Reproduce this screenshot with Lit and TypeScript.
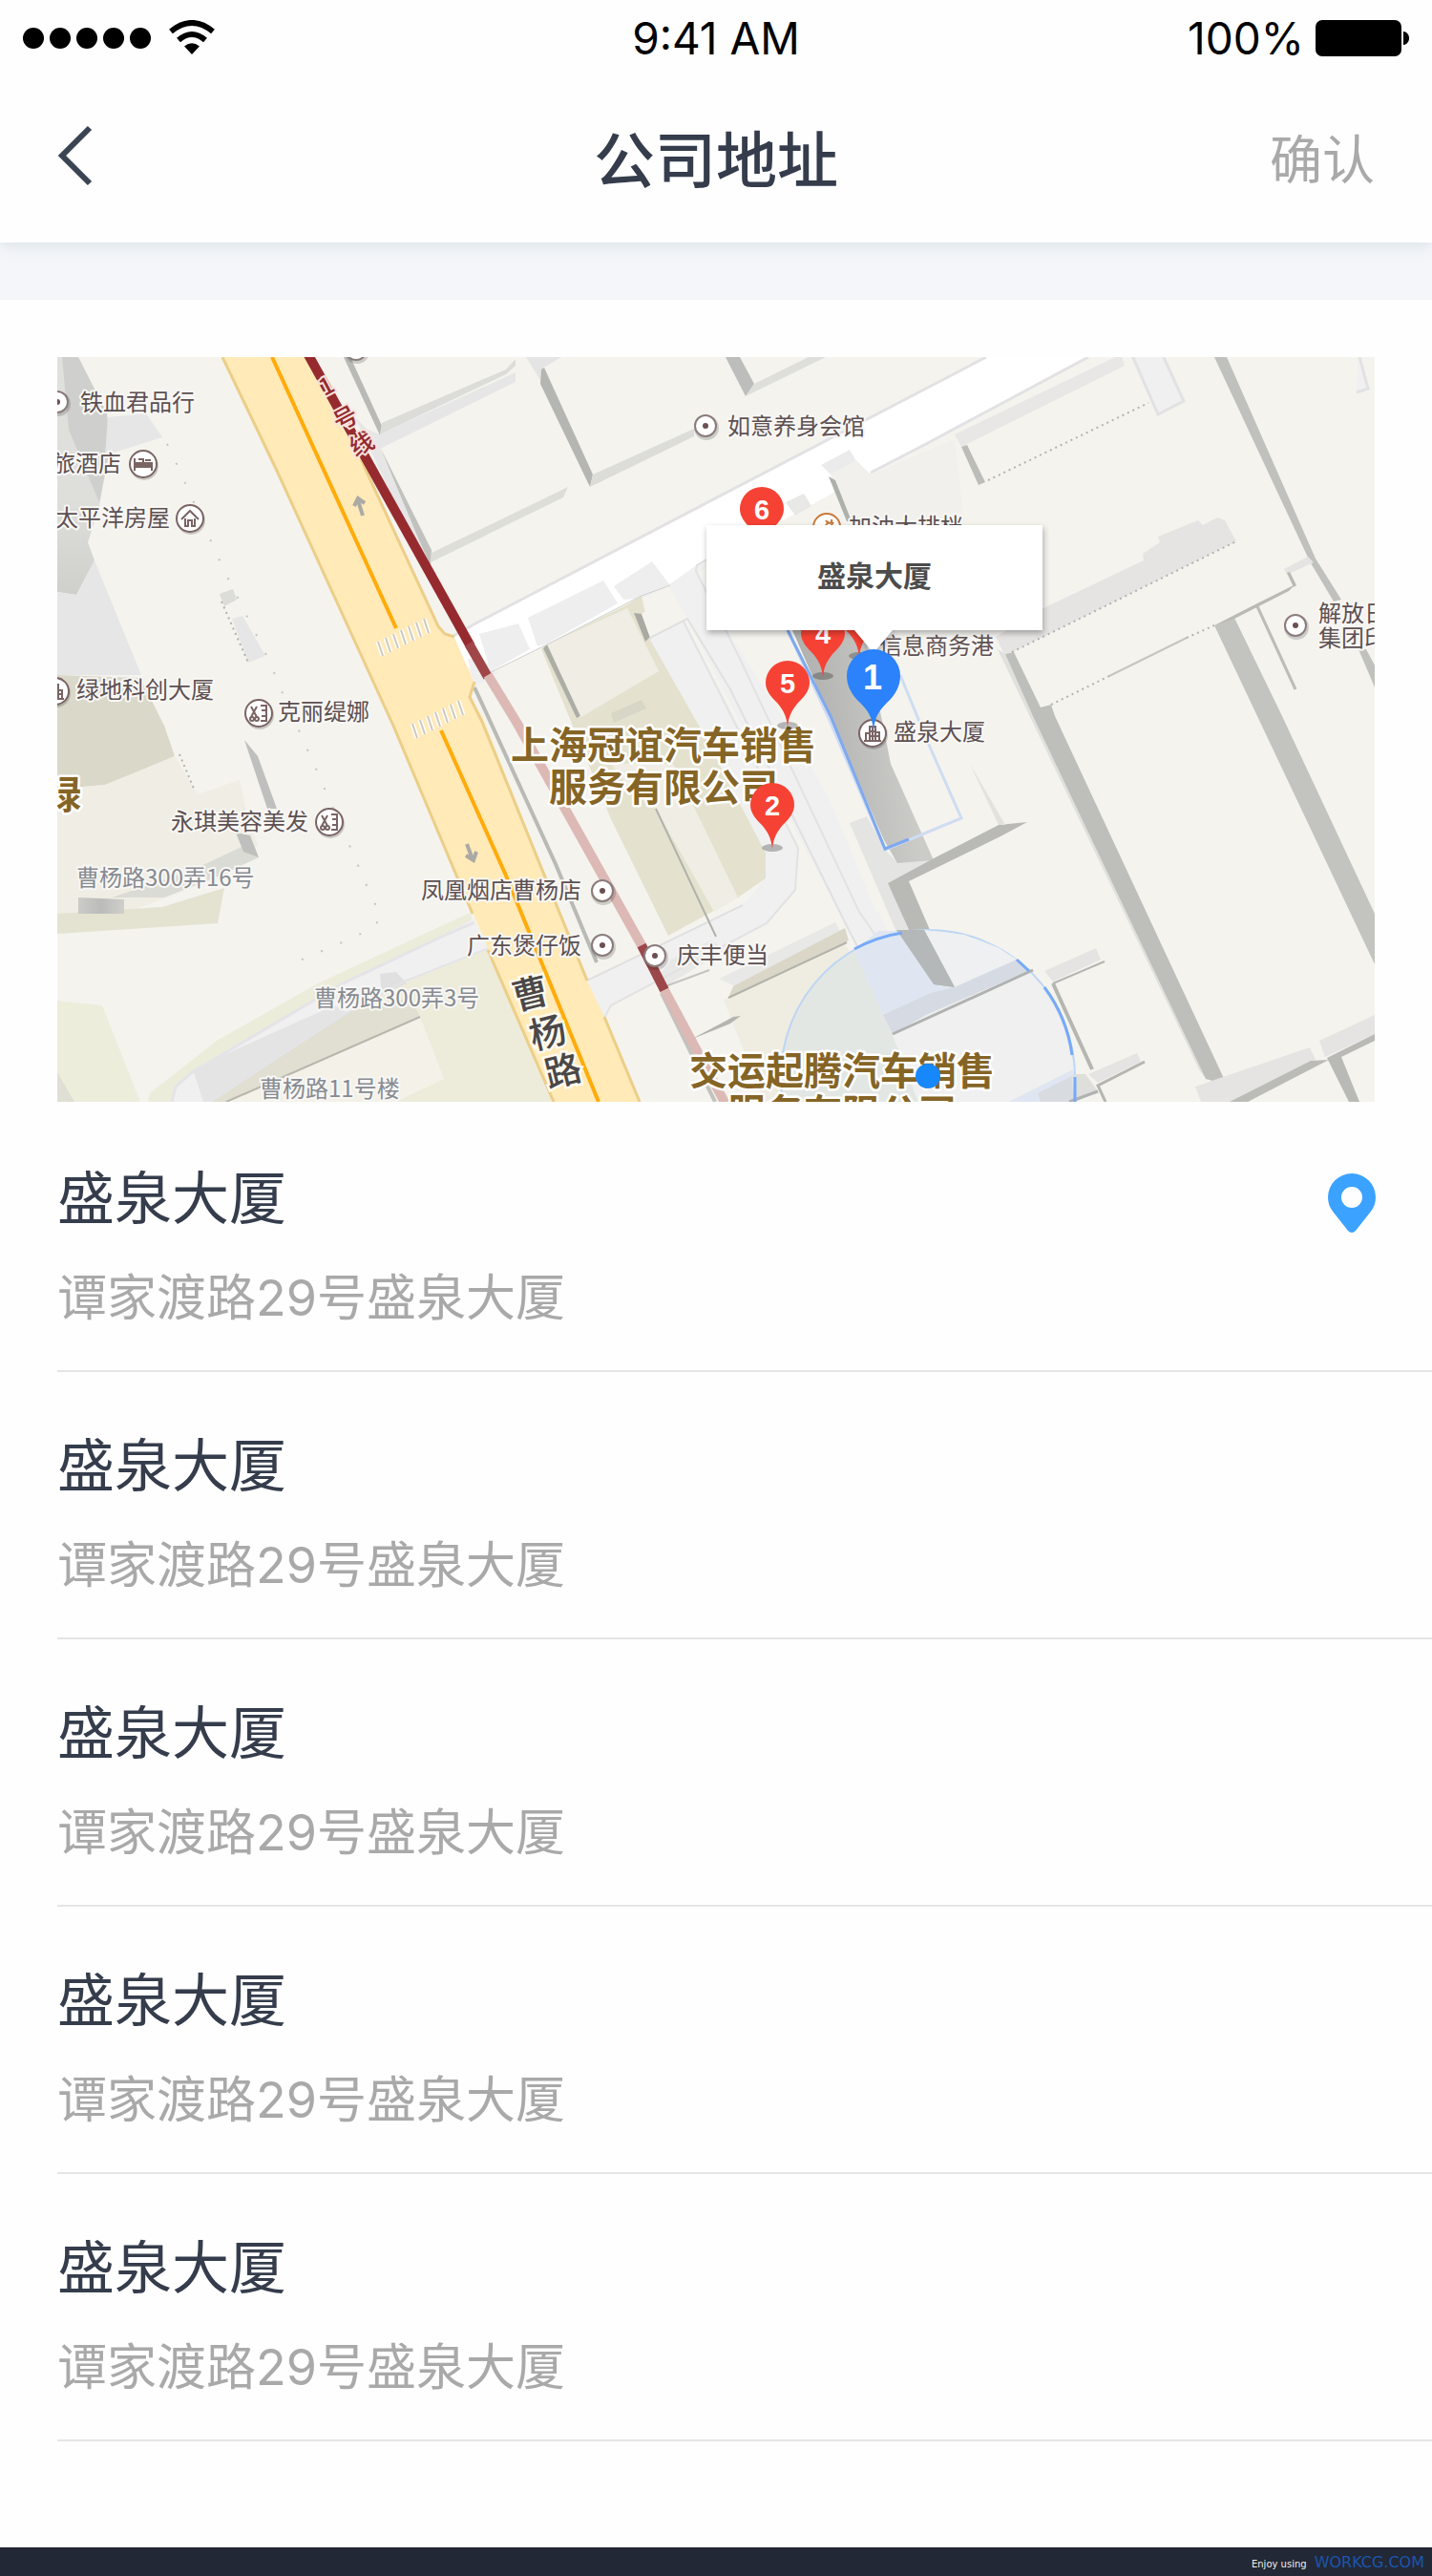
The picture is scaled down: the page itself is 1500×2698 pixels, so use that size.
import { LitElement, html, css, svg } from "lit";
import { customElement, property, state } from "lit/decorators.js";

interface Place {
  name: string;
  address: string;
}

const PLACES: Place[] = Array.from({ length: 5 }, () => ({
  name: "盛泉大厦",
  address: "谭家渡路29号盛泉大厦",
}));

type Label = [x: number, y: number, text: string];

const POI_LABELS: Label[] = [
  [84, 430, "铁血君品行"],
  [55, 494, "旅酒店"],
  [58, 551, "太平洋房屋"],
  [80, 731, "绿地科创大厦"],
  [291, 754, "克丽缇娜"],
  [179, 869, "永琪美容美发"],
  [441, 941, "凤凰烟店曹杨店"],
  [489, 999, "广东煲仔饭"],
  [709, 1009, "庆丰便当"],
  [762, 455, "如意养身会馆"],
  [889, 560, "加油大排档"],
  [921, 685, "信息商务港"],
  [936, 775, "盛泉大厦"],
  [1381, 651, "解放日"],
  [1381, 677, "集团印"],
];

const STREET_LABELS: Label[] = [
  [80, 928, "曹杨路300弄16号"],
  [329, 1054, "曹杨路300弄3号"],
  [272, 1149, "曹杨路11号楼"],
];

const COMPANY_LABELS: Label[] = [
  [45, 847, "绿"],
  [535, 795, "上海冠谊汽车销售"],
  [575, 839, "服务有限公司"],
  [722, 1136, "交运起腾汽车销售"],
  [762, 1180, "服务有限公司"],
];

const DOT_POIS = [
  [60, 421], [739, 446], [631, 933], [631, 990], [686, 1001], [1357, 655], [373, 366],
];

/* Filled areas of the map, painted in order: [colour, points]. */
const AREAS: [string, string][] = [
  ["url(#tower)", "60,374 82,374 112,433 115,470 104,530 92,568 99,587 80,623 60,620"],
  ["#cfd0cd", "65,374 82,374 112,433 115,470 104,526 72,450"],
  ["#e6e6e6", "113,437 153,433 170,458 110,477"],
  ["#e6e6e6", "99,587 148,707 60,707 60,620 80,623"],
  ["#dad8c9", "60,707 147,710 172,760 183,792 145,808 110,822 87,824 60,824"],
  ["#efede4", "60,824 87,824 110,822 183,792 207,832 251,817 258,850 270,885 240,915 130,957 60,957"],
  ["#e4e2d0", "60,957 170,950 235,930 228,967 60,978"],
  ["#dbdbd5", "117,940 200,912 255,886 271,898 235,915 172,940"],
  ["url(#shade)", "82,940 130,942 130,957 82,957"],
  ["#bfc0bd", "256,775 270,792 290,847 280,847"],
  ["#bfc0bd", "247,872 262,875 271,898 255,892"],
  ["#dcdcd9", "230,622 244,617 248,628 235,635"],
  ["#e6e6e6", "243,648 254,645 278,687 260,694"],
  ["#ededdc", "60,1048 107,1053 147,1154 60,1154"],
  ["#dfdfd3", "60,1123 78,1154 60,1154"],
  ["#ececda", "492,956 333,1030 227,1090 157,1145 155,1154 180,1154 357,1032 497,968"],
  ["#edecdb", "510,993 423,1027 363,1060 220,1154 578,1154"],
  ["#e1dfd2", "363,1060 430,1045 440,1065 240,1154 222,1154"],
  ["#f4f1e8", "440,1065 465,1130 415,1154 237,1154"],
  ["#f0f0f1", "495,963 467,978 357,1030 200,1123 184,1138 180,1154 220,1154 363,1060 423,1027 512,993"],
  ["#e4e4e4", "283,1083 350,1053 363,1060 220,1154 213,1154 202,1120"],
  ["#e0e0e0", "398,1020 415,1018 426,1030 400,1042"],
  /* blocks north of the side street */
  ["#e6e6e6", "385,450 398,455 540,390 540,400 398,470 452,590 448,600 372,437"],
  ["#b9bab6", "360,374 367,374 400,446 398,456"],
  ["#dcddd8", "400,443 530,387 540,376 540,383 530,392 398,455"],
  ["#c1c2be", "398,468 452,576 451,592 440,568"],
  ["#deded9", "452,579 500,556 595,510 590,521 451,589"],
  ["#e4e4e4", "551,374 588,374 568,386 566,398"],
  ["#b5b6b1", "567,387 570,385 621,497 618,510 566,402"],
  ["#dcddd8", "621,497 727,449 727,457 618,510"],
  ["#bdbebb", "760,374 775,374 790,402 781,415"],
  ["#dedfda", "790,402 847,374 865,374 781,415"],
];

const LOWER_AREAS: [string, string][] = [
  ["#eeeeee", "502,664 543,653 555,680 514,703"],
  ["#eeeeee", "553,647 632,608 647,632 573,674 563,677"],
  ["#eeeeee", "643,614 683,588 702,613 672,627 653,628"],
  ["#ebebeb", "860,487 890,471 897,483 870,497"],
  ["#e8e8e6", "823,526 842,517 850,530 833,540"],
  ["#f1f0ec", "870,497 897,482 912,497 1000,460 1010,550 890,550"],
  ["#aeb0aa", "868,499 875,503 892,546 887,546"],
  /* car dealer compound */
  ["#e4e2cf", "567,680 573,675 657,633 672,624 682,670 733,760 802,893 802,920 773,940 700,980 640,858"],
  ["#efede4", "573,675 657,637 690,703 607,752"],
  ["#acada5", "573,675 608,750 604,752 569,679"],
  ["#a9aaa2", "664,642 672,643 681,667 676,672"],
  ["#f4f3ee", "672,643 705,622 720,648 681,668"],
  ["#d8d6c6", "640,747 672,733 677,742 643,757"],
  ["#efede4", "640,800 705,800 773,940 748,955 687,847 655,820"],
  ["#f0f0f1", "681,670 716,651 790,790 836,890 833,932 803,967 640,1053 632,1066 616,1028 778,948 802,920 802,893 735,765"],
  ["#f0f0f1", "700,613 735,588 762,660 860,815 943,1017 918,1029 885,966 836,875 787,780 720,648"],
  ["#f4f3ee", "731,600 745,592 820,592 850,700 925,880 900,890 790,700"],
  ["#f0f0f1", "893,960 920,955 960,1040 930,1075"],
  ["#e8e8e6", "703,1005 745,985 760,995 697,1033 692,1020"],
  ["#e8e8e6", "753,1025 875,966 880,975 770,1033"],
  ["#dad7c8", "768,1033 885,972 889,985 763,1045"],
  ["#efece2", "758,1047 885,988 925,1063 960,1154 800,1154"],
  ["#b5b5af", "723,1089 768,1065 776,1064 765,1072"],
  /* 盛泉大厦 tower and its neighbours */
  ["#e4e4e2", "890,862 908,855 927,890 940,903 980,900 930,925 985,1040 945,990"],
  ["url(#tower2)", "830,660 905,660 933,800 978,901 940,904 926,880"],
  ["#b9bab6", "930,925 980,898 1046,864 1076,861 1048,876 952,923 1000,1034 978,1031"],
  ["#e2e2de", "1016,800 1053,864 1046,864"],
  /* east blocks */
  ["#e8e7e6", "1000,455 1168,374 1175,374 1178,383 1007,468"],
  ["#bcbdb8", "1007,468 1013,466 1032,505 1025,508"],
  ["#e5e4e2", "1093,637 1198,587 1197,580 1215,568 1213,562 1255,545 1260,550 1275,542 1283,545 1295,567 1060,683 1052,685 1043,667"],
  ["#c0c1bc", "1272,374 1285,374 1378,585 1405,628 1397,630 1372,588"],
  ["#c0c1bc", "1423,680 1431,680 1440,697 1440,720"],
  ["#c3c4bf", "1272,655 1293,647 1343,750 1440,957 1440,1010 1317,750"],
  ["#e0e0dd", "1045,680 1053,685 1263,1130 1256,1120"],
  ["#bebfba", "1053,685 1062,683 1090,741 1101,738 1105,750 1285,1136 1263,1130 1082,750"],
  ["#b9bab5", "1272,655 1315,633 1357,612 1350,619 1293,648"],
  ["#e5e4e2", "1345,596 1370,583 1376,589 1348,602"],
  ["#b9bab5", "1348,600 1351,599 1358,613 1355,615"],
  ["#e5e4e2", "1094,1017 1148,993 1153,1005 1103,1028"],
  ["#e5e4e2", "1140,1125 1191,1103 1195,1112 1150,1134"],
  ["#e5e4e2", "1252,1138 1372,1097 1378,1110 1290,1154 1258,1154"],
  ["#bbbcb7", "1288,1154 1373,1111 1392,1110 1307,1154"],
  ["#e5e4e2", "1382,1090 1440,1063 1440,1083 1388,1107"],
  ["#b9bab5", "1390,1108 1440,1083 1440,1090 1405,1107 1424,1154 1413,1154"],
];

/* Thin strokes: [colour, width, points]. */
const LINES: [string, number, string][] = [
  ["#e4e4e8", 3, "497,966 467,979 357,1031 200,1124 184,1138 180,1154"],
  ["#e4e4e8", 2, "512,993 423,1028 363,1061 220,1154"],
  ["#b8b7ad", 2, "440,1065 237,1154"],
  ["#e2e2e4", 3, "473,667 500,652 1033,374"],
  ["#e2e2e4", 3, "1140,374 970,465 912,495"],
  ["#cfcfcd", 1, "514,704 573,675 672,624 702,613"],
  ["#e2e2e3", 2, "740,586 730,592 729,598 775,690 900,955 943,1017"],
  ["#e2e2e3", 2, "716,651 760,738 836,888 833,932 803,967 640,1053 633,1066"],
  ["#e0e0e1", 2, "615,1027 778,948"],
  ["#e0e0e1", 2, "681,668 720,648 765,722 885,966 918,1030 943,1018"],
  ["#b9bab6", 4, "497,720 510,748 582,905 625,1008"],
  ["#b1b2ab", 2, "687,847 750,981"],
  ["#b1b2ab", 2, "887,987 763,1045"],
  ["#c2c2bf", 4, "693,1040 749,1154"],
  ["#c4c4c0", 2, "697,1033 743,1016"],
  ["#c5c6c1", 2, "1162,708 1243,668"],
  ["#bcbdb8", 3, "1317,635 1357,722"],
  ["#b5b6b1", 2, "1157,1007 1103,1030"],
  ["#b5b6b1", 4, "1103,1030 1144,1120"],
  ["#b5b6b1", 3, "1199,1112 1150,1137 1158,1154"],
];

/* Dotted outlines of plots. */
const DOTTED = [
  "1035,503 1203,422", "1060,683 1295,567", "1101,738 1162,708",
  "1243,668 1272,655", "232,630 260,694", "188,790 203,826",
];

const SPARSE = "175,465 187,490 198,515 217,558 226,578 235,598 283,694 292,717 314,767 330,803 346,840 369,892 383,925 399,960 391,972 356,988 321,1003 300,1012";

const poly = ([fill, points]: [string, string]) => svg`<polygon fill=${fill} points=${points}/>`;
const line = ([stroke, w, points]: [string, number, string]) =>
  svg`<polyline fill="none" stroke=${stroke} stroke-width=${w} points=${points}/>`;
const label = (cls: string) => ([x, y, text]: Label) =>
  svg`<text class=${cls} x=${x} y=${y}>${text}</text>`;

const pin = (x: number, tip: number, n: string) => svg`
  <ellipse cx=${x} cy=${tip - 1} rx="11" ry="4" fill="#000" opacity=".25"/>
  <path fill="#f64234" d="M${x} ${tip}c-1-10-4-17-11-25-7-7-12-13-12-21a23 23 0 0 1 46 0c0 8-5 14-12 21-7 8-10 15-11 25z"/>
  <text class="pin-no" x=${x} y=${tip - 35}>${n}</text>`;

const crosswalk = (x: number, y: number) =>
  [0, 1, 2, 3, 4, 5, 6].map(
    (i) => svg`<path d="M${x + i * 8} ${y - i * 4}l5 15" stroke="#fff" stroke-width="5"/>
      <path d="M${x + i * 8} ${y - i * 4}l5 15" stroke="#cfc8ba" stroke-width="2"/>`
  );

const badge = (x: number, y: number, glyph: unknown, colour = "#7a6464") => svg`
  <g transform="translate(${x} ${y})">
    <circle cx="1" cy="2" r="15" fill="#000" opacity=".18"/>
    <circle r="14" fill="#fff" stroke=${colour} stroke-width="2"/>
    <g fill="none" stroke=${colour} stroke-width="2">${glyph}</g>
  </g>`;

const BED = svg`<path d="M-9-6V7M-9 3H9M9 7V-1H-8M-5-5H0V-2M2-4H8" /><path d="M-8-1H9V3H-8Z" fill="#7a6464"/>`;
const HOUSE = svg`<path d="M-9 1L0-8L9 1M-5 0V8H-2V2H2V8H5V0"/>`;
const SALON = svg`<path d="M-8-7L-2 4M-2-7L-8 4M2-8H8V8H2M3-3H8M3 3H8"/><circle cx="-7" cy="6" r="2"/><circle cx="-2" cy="6" r="2"/>`;
const OFFICE = svg`<path d="M-9 8H9M-7 8V0H-3V8M-3 8V-7H3V8M3-1H7V8M0-7V8M-3-2H3M-3 3H7"/>`;
const FOOD = svg`<path d="M-6 6L2-6M0 5L7-5M-1-7C2-2 6-4 5-8"/>`;

@customElement("district-map")
class DistrictMap extends LitElement {
  @property() place = "";

  static styles = css`
    :host { display: block; }
    svg { display: block; width: 100%; height: auto; }
    text { font-family: "Noto Sans CJK SC", sans-serif; }
    .poi, .street { font-size: 24px; paint-order: stroke; stroke: #f8f7f4; stroke-width: 4px; stroke-linejoin: round; }
    .poi { fill: #5d5052; }
    .street { fill: #878b92; }
    .company { font-size: 40px; font-weight: 700; fill: #856526; paint-order: stroke; stroke: #fff; stroke-width: 5px; stroke-linejoin: round; }
    .road { font-size: 38px; font-weight: 500; fill: #4a4848; text-anchor: middle; paint-order: stroke; stroke: #fffaf0; stroke-width: 5px; }
    .metro { font-size: 25px; font-weight: 500; fill: #932a2e; text-anchor: middle; paint-order: stroke; stroke: #f7e3dd; stroke-width: 4px; }
    .pin-no { font-family: "Liberation Sans", sans-serif; font-size: 29px; font-weight: 700; fill: #fff; text-anchor: middle; }
    .pin-main { font-size: 36px; }
    .bubble { font-size: 30px; font-weight: 700; fill: #4c4c4c; text-anchor: middle; }
    .drop { filter: drop-shadow(1px 3px 3px rgba(0, 0, 0, 0.3)); }
  `;

  render() {
    return html`
      <svg viewBox="60 374 1380 780" role="img" aria-label="地图">
        <defs>
          <linearGradient id="tower" x1="0" y1="0" x2="0" y2="1">
            <stop offset="0" stop-color="#e0e0dd"/><stop offset=".6" stop-color="#dededb"/><stop offset="1" stop-color="#cfd0cc"/>
          </linearGradient>
          <linearGradient id="shade"><stop offset="0" stop-color="#cbccc8"/><stop offset=".5" stop-color="#bbbcb9"/><stop offset="1" stop-color="#cfcfcb"/></linearGradient>
          <linearGradient id="tower2" x1="0" y1=".6" x2="1" y2=".4">
            <stop offset=".1" stop-color="#afb0ad"/><stop offset=".8" stop-color="#cbcbc8"/>
          </linearGradient>
        </defs>
        <rect x="60" y="374" width="1380" height="780" fill="#f4f3ee"/>
        ${AREAS.map(poly)}
        <polygon fill="#fff" points="473,667 500,652 1033,374 1140,374 970,465 912,495 820,545 740,586 700,613 573,675 514,704 500,710 483,690"/>
        ${LOWER_AREAS.map(poly)}
        <g fill="#f0f0f0" stroke="#e2e2e4" stroke-width="3">
          <polygon points="1185,370 1217,370 1240,420 1213,434"/>
          <polyline points="1423,370 1433,407 1421,411"/>
        </g>
        <polygon fill="#efefef" points="490,690 505,690 522,705 497,720"/>
        ${LINES.map(line)}
        <g fill="none" stroke="#b3b3ad" stroke-width="2" stroke-dasharray="2 4">
          ${DOTTED.map((p) => svg`<polyline points=${p}/>`)}
        </g>
        <polyline fill="none" stroke="#c4c4c0" stroke-width="2" stroke-dasharray="2 20" points=${SPARSE}/>

        <polygon fill="#ffeab8" points="233,374 320,374 383,492 462,660 476,668 497,716 492,730 505,750 615,1027 633,1065 670,1154 580,1154 497,960 412,760 290,493"/>
        <g fill="none" stroke="#ecce88" stroke-width="3">
          <polyline points="233,374 290,493 412,760 495,957"/>
          <polyline points="511,995 580,1154"/>
          <polyline points="378,480 383,492 459,656 466,664 476,667"/>
          <polyline points="497,714 492,730 505,756 615,1027"/>
          <polyline points="633,1065 670,1154"/>
        </g>
        <g fill="none" stroke="#ffab0a" stroke-width="4">
          <path d="M285 374L415 658M462 765L530 917L627 1154"/>
        </g>
        ${crosswalk(396, 672)} ${crosswalk(432, 758)}
        <g fill="none" stroke="#aaa9a4" stroke-width="4">
          <path d="M380 540L375 524M371 530L375 522L382 527"/>
          <path d="M489 884L495 900M488 896L496 901L499 892"/>
        </g>

        <g fill="none" stroke-width="10">
          <path d="M322 370L493 677" stroke="#962b2f"/>
          <path d="M491 674L511 709" stroke="#a04648"/>
          <path d="M511 707L542 758L672 990" stroke="#dcb9b5"/>
          <path d="M672 990L696 1037" stroke="#9c4749"/>
          <path d="M696 1037L762 1160" stroke="#dcb9b5"/>
        </g>

        <path fill="#e9ebe4" d="M895 995A154 154 0 0 0 819 1154H962L935 1084L925 1063Z"/>
        <circle cx="972" cy="1128" r="154" fill="#2f7df5" fill-opacity=".03" stroke="#bdd5f5" stroke-width="2"/>
        <polygon fill="#dfe6f1" points="895,995 920,975 948,975 980,1032 1000,1034 1040,1015 1065,1005 970,1050 925,1063"/>
        <polygon fill="#eef0f1" points="968,974 1010,979 1045,992 1065,1005 1000,1034"/>
        <polygon fill="#b4b8b9" points="939,974 968,974 1000,1034 978,1031"/>
        <polygon fill="#d6dae2" points="925,1063 975,1040 1000,1034 1065,1005 1079,1016 970,1063 935,1083"/>
        <polygon fill="#f0f0f0" points="935,1084 1079,1019 1113,1068 1125,1122 1055,1154 962,1154"/>
        <polygon fill="#dfe6f1" points="1057,1154 1124,1120 1124,1154"/>
        <polygon fill="#d8dbe0" points="1087,1145 1123,1127 1124,1154 1090,1154"/>
        <polygon fill="#dededb" points="1124,1125 1137,1125 1150,1143 1127,1154"/>
        <path d="M1082 1016L935 1083M1150 1143L1120 1154" stroke="#b0b2b2" stroke-width="3"/>
        <path d="M895 994A154 154 0 0 1 945 977M1065 1005L1078 1017M1094 1034A154 154 0 0 1 1123 1105M1126 1128V1154" fill="none" stroke="#76aaf8" stroke-width="3"/>

        <path d="M825 660L867 750L927 890L1007 857L973 780L943 707" fill="none" stroke="#cfdcf3" stroke-width="3"/>
        <path d="M825 660L870 750L927 889L952 879" fill="none" stroke="#7fa9ef" stroke-width="3"/>

        ${DOT_POIS.map(([x, y]) => svg`
          <circle cx=${x + 1} cy=${y + 2} r="13" fill="#000" opacity=".16"/>
          <circle cx=${x} cy=${y} r="11" fill="#fff" stroke="#8b7c7c" stroke-width="2"/>
          <circle cx=${x} cy=${y} r="3" fill="#6b5052"/>`)}
        ${badge(150, 486, BED)} ${badge(199, 543, HOUSE)} ${badge(271, 747, SALON)}
        ${badge(345, 861, SALON)} ${badge(58, 724, OFFICE)} ${badge(914, 768, OFFICE)}
        ${badge(866, 552, FOOD, "#c97a3a")}

        ${STREET_LABELS.map(label("street"))}
        ${POI_LABELS.map(label("poi"))}
        ${COMPANY_LABELS.map(label("company"))}
        <text class="road" transform="translate(559 1054) rotate(-14)">曹</text>
        <text class="road" transform="translate(577 1095) rotate(-14)">杨</text>
        <text class="road" transform="translate(593 1135) rotate(-14)">路</text>
        <text class="metro" transform="translate(346 412) rotate(-28)">1</text>
        <text class="metro" transform="translate(366 446) rotate(-28)">号</text>
        <text class="metro" transform="translate(383 473) rotate(-28)">线</text>

        ${pin(798, 579, "6")} ${pin(900, 688, "3")} ${pin(862, 709, "4")}
        ${pin(825, 761, "5")} ${pin(809, 889, "2")}

        <path class="drop" fill="#fff" d="M740 550H1092V660H935L915 684L895 660H740Z"/>
        <text class="bubble" x="916" y="614">${this.place}</text>

        <path fill="#2b82fb" d="M915 766c-1-14-5-21-14-30-9-8-14-18-14-28a28 28 0 0 1 56 0c0 10-5 20-14 28-9 9-13 16-14 30z"/>
        <text class="pin-no pin-main" x="914" y="722">1</text>
        <circle cx="972" cy="1127" r="13" fill="#1688fb"/>
      </svg>
    `;
  }
}

@customElement("app-root")
class AppRoot extends LitElement {
  @state() private selected = 0;

  static styles = css`
    :host {
      display: flex;
      flex-direction: column;
      min-height: 100vh;
      background: #fefefe;
      color: #353d4c;
      font-family: "Noto Sans CJK SC", sans-serif;
    }
    * { box-sizing: border-box; }
    button { border: 0; padding: 0; background: none; font: inherit; color: inherit; cursor: pointer; }
    svg { display: block; flex: none; }
    .top { position: relative; z-index: 1; background: #fefefe; box-shadow: 0 4px 16px rgba(60, 100, 110, 0.12); }
    .bar { display: grid; grid-template-columns: 1fr auto 1fr; align-items: center; }
    .status { height: 80px; padding: 0 24px; color: #000; font-family: Inter, sans-serif; font-size: 46px; line-height: 56px; }
    .end { justify-self: end; display: flex; align-items: center; gap: 12px; }
    .nav { height: 174px; padding: 0 60px 8px; }
    .back { justify-self: start; }
    .title { margin: 0; font-size: 64px; line-height: 88px; font-weight: 500; }
    .confirm { font-size: 55px; line-height: 76px; color: #a9a9a9; }
    .strip { height: 60px; background: #f4f6fa; }
    .map { padding: 60px 60px 0; }
    .places { list-style: none; margin: 0; padding: 3px 0 0 60px; }
    .row {
      display: flex;
      justify-content: space-between;
      align-items: flex-start;
      width: 100%;
      height: 280px;
      padding: 52px 59px 0 0;
      border-bottom: 2px solid #e5e5e5;
      text-align: left;
    }
    .text { display: flex; flex-direction: column; gap: 31px; }
    .name { font-size: 60px; line-height: 84px; }
    .address { font-family: Inter, "Noto Sans CJK SC", sans-serif; font-size: 52px; line-height: 72px; color: #a9a9a9; }
    .marker { margin-top: 20px; }
    .foot {
      display: flex;
      justify-content: flex-end;
      align-items: baseline;
      gap: 8px;
      height: 30px;
      margin-top: auto;
      padding: 6px 8px 0;
      background: #222835;
      color: #f0f0f0;
      font-family: "DejaVu Sans", sans-serif;
      font-size: 10px;
      line-height: 20px;
    }
    .foot a { color: #1c55ae; font-size: 16px; text-decoration: none; }
  `;

  render() {
    return html`
      <header class="top">
        <div class="bar status">
          <svg width="202" height="38" viewBox="24 20 202 38" aria-hidden="true">
            ${[35, 63, 91, 119, 147].map((x) => svg`<circle cx=${x} cy="39" r="11"/>`)}
            <g fill="none" stroke="#000" stroke-width="6">
              <path d="M179 32Q201 14 223 32"/>
              <path d="M187 41Q201 29 215 41"/>
            </g>
            <path d="M193 47.500Q201 41 209 47.500L201 56Z"/>
          </svg>
          <span>9:41 AM</span>
          <span class="end">100%
            <svg width="98" height="38" viewBox="0 0 98 38" aria-hidden="true">
              <rect width="90" height="38" rx="7"/>
              <path d="M92 12c8 1 8 13 0 14z"/>
            </svg>
          </span>
        </div>
        <div class="bar nav">
          <button class="back" aria-label="返回">
            <svg width="38" height="64" viewBox="0 0 38 64"><path d="M34 3L5 32L34 61" fill="none" stroke="#3b4453" stroke-width="6"/></svg>
          </button>
          <h1 class="title">公司地址</h1>
          <span class="end"><button class="confirm">确认</button></span>
        </div>
      </header>
      <div class="strip"></div>
      <main>
        <div class="map"><district-map .place=${PLACES[this.selected].name}></district-map></div>
        <ul class="places">
          ${PLACES.map((p, i) => html`
            <li>
              <button class="row" aria-pressed=${i === this.selected ? "true" : "false"} @click=${() => (this.selected = i)}>
                <span class="text">
                  <span class="name">${p.name}</span>
                  <span class="address">${p.address}</span>
                </span>
                ${i === this.selected
                  ? html`<svg class="marker" width="50" height="62" viewBox="0 0 50 62" aria-hidden="true">
                      <path fill="#3ba2ff" fill-rule="evenodd" d="M25 0a25 25 0 0 1 25 25c0 6-2 11-6 16L29 60q-4 4-8 0L6 41C2 36 0 31 0 25A25 25 0 0 1 25 0zm0 14a11 11 0 1 0 0 22a11 11 0 1 0 0-22z"/>
                    </svg>`
                  : ""}
              </button>
            </li>`)}
        </ul>
      </main>
      <footer class="foot"><span>Enjoy using</span><a href="#workcg">WORKCG.COM</a></footer>
    `;
  }
}
